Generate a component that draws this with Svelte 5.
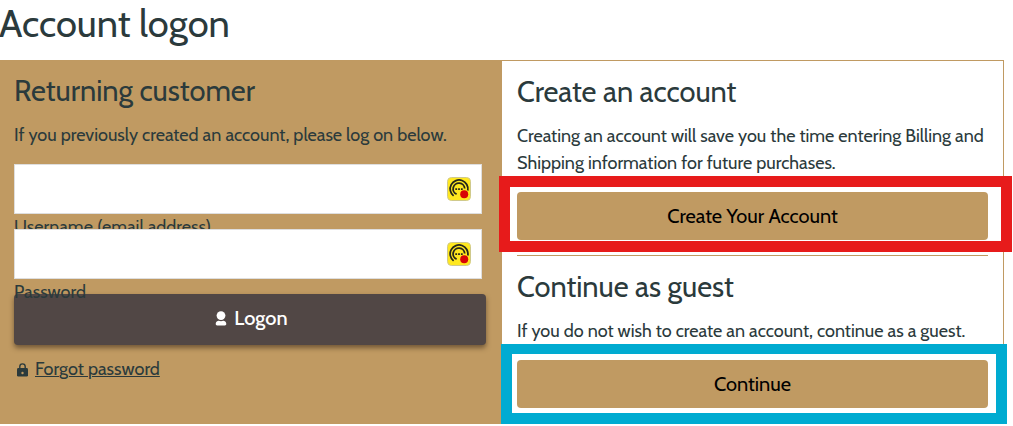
<script lang="ts">
	let username = '';
	let password = '';
</script>

<main>
	<h1>Account logon</h1>

	<div class="panels">
		<section class="panel returning">
			<h2>Returning customer</h2>
			<p class="intro">If you previously created an account, please log on below.</p>

			<form on:submit|preventDefault>
				<div class="field">
					<div class="control">
						<input id="username" type="text" bind:value={username} />
						<svg class="manager" viewBox="0 0 24 24" aria-hidden="true">
							<rect x=".5" y=".5" width="23" height="23" rx="4" fill="#ffe81f" stroke="#cfc98c" />
							<path
								d="M6.6 18.9A8.9 8.9 0 1 1 20.8 13.5M9.6 17.2A5.8 5.8 0 1 1 17.7 11.5"
								fill="none"
								stroke="#25261b"
								stroke-width="1.8"
							/>
							<path d="M8.3 12.2h7.8" stroke="#25261b" stroke-width="1.8" stroke-dasharray="1.8 1" />
							<circle cx="17.2" cy="17.3" r="4" fill="#d80505" />
						</svg>
					</div>
					<label for="username">Username (email address)</label>
				</div>
				<div class="field">
					<div class="control">
						<input id="password" type="password" bind:value={password} />
						<svg class="manager" viewBox="0 0 24 24" aria-hidden="true">
							<rect x=".5" y=".5" width="23" height="23" rx="4" fill="#ffe81f" stroke="#cfc98c" />
							<path
								d="M6.6 18.9A8.9 8.9 0 1 1 20.8 13.5M9.6 17.2A5.8 5.8 0 1 1 17.7 11.5"
								fill="none"
								stroke="#25261b"
								stroke-width="1.8"
							/>
							<path d="M8.3 12.2h7.8" stroke="#25261b" stroke-width="1.8" stroke-dasharray="1.8 1" />
							<circle cx="17.2" cy="17.3" r="4" fill="#d80505" />
						</svg>
					</div>
					<label class="over" for="password">Password</label>
				</div>
				<button class="logon" type="submit">
					<svg width="12" height="15" viewBox="0 0 12 15" aria-hidden="true">
						<circle cx="6" cy="4.6" r="4.4" fill="#fff" />
						<path
							d="M.7 12.8C.7 10.7 2.7 9.7 3.8 9.8q2.2.9 4.4 0c1.1-.1 3.1.9 3.1 3 0 1-.5 1.6-1.5 1.6H2.2c-1 0-1.5-.6-1.5-1.6z"
							fill="#fff"
						/>
					</svg>
					<span>Logon</span>
				</button>
			</form>

			<div class="forgot">
				<svg width="11" height="14" viewBox="0 0 11 14" aria-hidden="true">
					<path d="M2.8 6V3.6a2.7 2.7 0 0 1 5.4 0V6" fill="none" stroke="#2b3a3c" stroke-width="1.4" />
					<rect y="5" width="11" height="8.6" rx="1.4" fill="#2b3a3c" />
					<circle cx="5.5" cy="10" r="1.2" fill="#c09a62" />
				</svg>
				<a href="#forgot">Forgot password</a>
			</div>
		</section>

		<section class="panel options">
			<div class="option">
				<h2>Create an account</h2>
				<p>
					Creating an account will save you the time entering Billing and<br />
					Shipping information for future purchases.
				</p>
				<div class="action red">
					<button>Create Your Account</button>
				</div>
			</div>
			<hr />
			<div class="option">
				<h2>Continue as guest</h2>
				<p>If you do not wish to create an account, continue as a guest.</p>
				<div class="action blue">
					<button>Continue</button>
				</div>
			</div>
		</section>
	</div>
</main>

<style>
	:global(body) {
		background: #fff;
		overflow: hidden;
	}

	main {
		width: 1004px;
		height: 426px;
		font-family: Cabin, Lato, sans-serif;
		font-size: 18px;
		line-height: 27px;
		color: #2b3a3c;
	}

	h1,
	h2,
	p {
		margin: 0;
		font-weight: 400;
		white-space: nowrap;
	}

	h1 {
		height: 60px;
		line-height: 48px;
		font-size: 38px;
		margin-left: -1px;
	}

	h2 {
		font-size: 29px;
		line-height: 36px;
	}

	.panels {
		display: grid;
		grid-template-columns: 502px 502px;
		height: 364px;
	}

	.panel {
		box-sizing: border-box;
	}

	.returning {
		padding: 13px 16px 0 14px;
		background: #c09a62;
	}

	.intro {
		margin: 13px 0 15px;
	}

	.field {
		width: 468px;
		height: 65px;
	}

	.control {
		position: relative;
		height: 50px;
	}

	input {
		display: block;
		box-sizing: border-box;
		width: 100%;
		height: 50px;
		padding: 0 44px 0 12px;
		border: 1px solid #dedede;
		background: #fff;
		font: inherit;
		outline: none;
	}

	.manager {
		position: absolute;
		top: 13px;
		right: 11px;
		width: 24px;
		height: 24px;
	}

	label {
		display: block;
		height: 15px;
		line-height: 27px;
		white-space: nowrap;
	}

	/* the label runs onto the button below it */
	.over {
		position: relative;
		z-index: 1;
	}

	.logon {
		display: flex;
		align-items: center;
		justify-content: center;
		gap: 7px;
		width: 472px;
		height: 51px;
		padding: 0 0 3px 3px;
		border: 0;
		border-radius: 4px;
		background: #514745;
		box-shadow: 0 3px 5px rgba(50, 35, 20, 0.55);
		color: #fff;
		font: 500 20px Cabin, Lato, sans-serif;
	}

	.forgot {
		display: flex;
		align-items: center;
		gap: 7px;
		margin: 11px 0 0 3px;
	}

	a {
		color: inherit;
		text-underline-offset: 1px;
		text-decoration-thickness: 1px;
	}

	.options {
		padding: 13px 15px 0;
		border: 1px solid #c09a62;
		border-left: 0;
		border-bottom: 0;
	}

	.option p {
		margin: 13px 0 15px;
	}

	.action {
		position: relative;
		height: 48px;
	}

	.action::before {
		content: '';
		position: absolute;
		box-sizing: border-box;
		pointer-events: none;
	}

	.red::before {
		inset: -16px -24px -12px -18px;
		border: 11px solid #e71b1b;
		border-bottom-width: 11px;
	}

	.blue::before {
		inset: -16px -19px -16px -16px;
		border: 11px solid #00abd1;
		border-top-width: 10px;
	}

	.action button {
		width: 471px;
		height: 48px;
		padding: 0;
		border: 0;
		border-radius: 4px;
		background: #c09a62;
		color: #000;
		font: 20px Cabin, Lato, sans-serif;
	}

	hr {
		height: 1px;
		margin: 15px 0 13px;
		border: 0;
		background: #c09a62;
	}
</style>
